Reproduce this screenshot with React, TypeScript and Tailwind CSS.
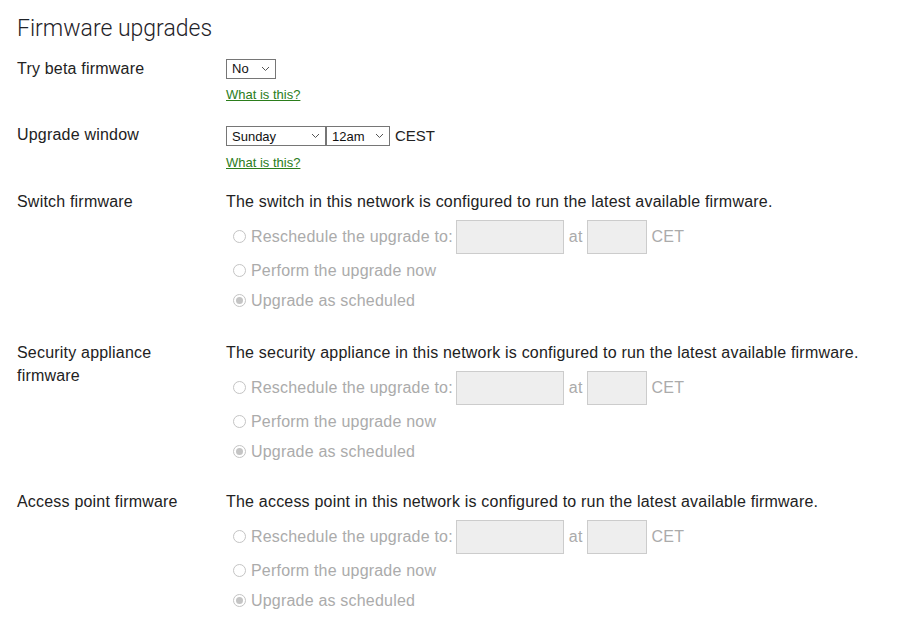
import React from 'react';

const Chevron = () => (
  <svg width="9" height="6" viewBox="0 0 9 6" className="shrink-0">
    <path d="M1 1l3.5 3.5L8 1" fill="none" stroke="#555" strokeWidth="1" />
  </svg>
);

const FakeSelect = ({ value, width }: { value: string; width: string }) => (
  <div className={`${width} h-[20px] border border-[#767676] bg-white flex items-center justify-between pl-[5px] pr-[5px] text-[13px] text-[#111]`}>
    <span>{value}</span>
    <Chevron />
  </div>
);

const Radio = ({ checked }: { checked?: boolean }) => (
  <span className="w-[13px] h-[13px] rounded-full border border-[#c4c4c4] bg-white flex items-center justify-center mr-[5px] shrink-0">
    {checked && <span className="w-[7px] h-[7px] rounded-full bg-[#c4c4c4]" />}
  </span>
);

const FirmwareSection = ({ label, device, className }: { label: React.ReactNode; device: string; className: string }) => (
  <div className={`flex ${className}`}>
    <div className="w-[209px] shrink-0 leading-[23px]">{label}</div>
    <div className="flex-1">
      <div className="leading-[23px]">The {device} in this network is configured to run the latest available firmware.</div>
      <div className="mt-[7px] text-[#ababab]">
        <div className="h-[34px] flex items-center pl-[7px]">
          <Radio />
          <span>Reschedule the upgrade to:</span>
          <div className="w-[108px] h-[34px] ml-[3px] bg-[#eeeeee] border border-[#cccccc]" />
          <span className="ml-[5px]">at</span>
          <div className="w-[60px] h-[34px] ml-[4px] bg-[#eeeeee] border border-[#cccccc]" />
          <span className="ml-[5px]">CET</span>
        </div>
        <div className="h-[30px] mt-[2px] flex items-center pl-[7px]">
          <Radio />
          <span>Perform the upgrade now</span>
        </div>
        <div className="h-[30px] flex items-center pl-[7px]">
          <Radio checked />
          <span>Upgrade as scheduled</span>
        </div>
      </div>
    </div>
  </div>
);

const App = () => {
  return (
    <div className="min-h-screen bg-white pl-[17px] pt-[14px] text-[16px] tracking-[0.2px] text-[#222] font-['Liberation_Sans',Arial,sans-serif]">
      <h1 className="text-[23px] leading-[30px] font-light tracking-normal text-[#1f2329] font-['Roboto',sans-serif]">Firmware upgrades</h1>

      {/* Beta */}
      <div className="flex mt-[13px]">
        <div className="w-[209px] shrink-0 leading-[23px]">Try beta firmware</div>
        <div>
          <div className="mt-[2px] tracking-normal">
            <FakeSelect value="No" width="w-[50px]" />
          </div>
          <a href="#" className="block mt-[8px] text-[13px] leading-[16px] tracking-normal text-[#2b7d1b] underline">What is this?</a>
        </div>
      </div>

      {/* Upgrade window */}
      <div className="flex mt-[20px]">
        <div className="w-[209px] shrink-0 leading-[23px]">Upgrade window</div>
        <div>
          <div className="mt-[2px] flex items-center tracking-normal">
            <FakeSelect value="Sunday" width="w-[100px]" />
            <FakeSelect value="12am" width="w-[64px]" />
            <span className="ml-[5px] text-[15px]">CEST</span>
          </div>
          <a href="#" className="block mt-[7px] text-[13px] leading-[16px] tracking-normal text-[#2b7d1b] underline">What is this?</a>
        </div>
      </div>

      <FirmwareSection className="mt-[19px]" label="Switch firmware" device="switch" />
      <FirmwareSection
        className="mt-[25px]"
        label={<>Security appliance<br />firmware</>}
        device="security appliance"
      />
      <FirmwareSection className="mt-[23px]" label="Access point firmware" device="access point" />
    </div>
  );
};

export default App;
